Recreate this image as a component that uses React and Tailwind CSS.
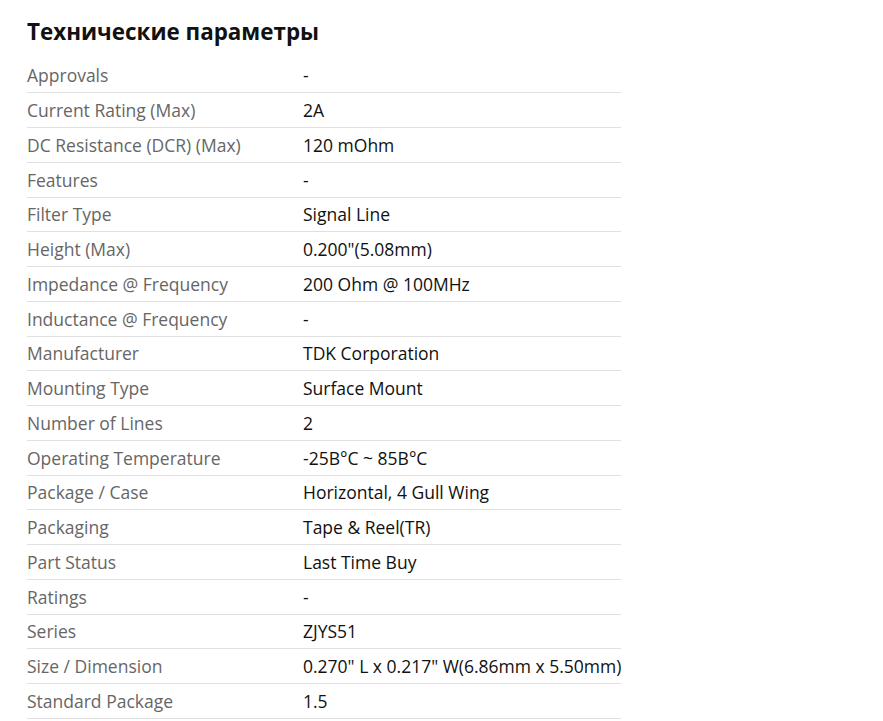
import React from 'react'

const specs = [
  ['Approvals', '-'],
  ['Current Rating (Max)', '2A'],
  ['DC Resistance (DCR) (Max)', '120 mOhm'],
  ['Features', '-'],
  ['Filter Type', 'Signal Line'],
  ['Height (Max)', '0.200"(5.08mm)'],
  ['Impedance @ Frequency', '200 Ohm @ 100MHz'],
  ['Inductance @ Frequency', '-'],
  ['Manufacturer', 'TDK Corporation'],
  ['Mounting Type', 'Surface Mount'],
  ['Number of Lines', '2'],
  ['Operating Temperature', '-25В°C ~ 85В°C'],
  ['Package / Case', 'Horizontal, 4 Gull Wing'],
  ['Packaging', 'Tape & Reel(TR)'],
  ['Part Status', 'Last Time Buy'],
  ['Ratings', '-'],
  ['Series', 'ZJYS51'],
  ['Size / Dimension', '0.270" L x 0.217" W(6.86mm x 5.50mm)'],
  ['Standard Package', '1.5'],
]

export default function App() {
  return (
    <div className="bg-white min-h-[721px] pl-[27px] pt-[17px] font-['Open_Sans',sans-serif]">
      <h2 className="text-[22.4px] font-bold leading-[30px] text-[#111] mb-[11px]">Технические параметры</h2>
      <table className="border-collapse text-[17.5px]">
        <tbody>
          {specs.map(([label, value]) => (
            <tr key={label} className="border-b border-[#e0e0e0] h-[34.75px]">
              <td className="w-[276px] p-0 pt-px text-[#666] leading-[25px] align-middle">{label}</td>
              <td className="p-0 pt-px text-[#111] leading-[25px] align-middle whitespace-nowrap">{value}</td>
            </tr>
          ))}
        </tbody>
      </table>
    </div>
  )
}
